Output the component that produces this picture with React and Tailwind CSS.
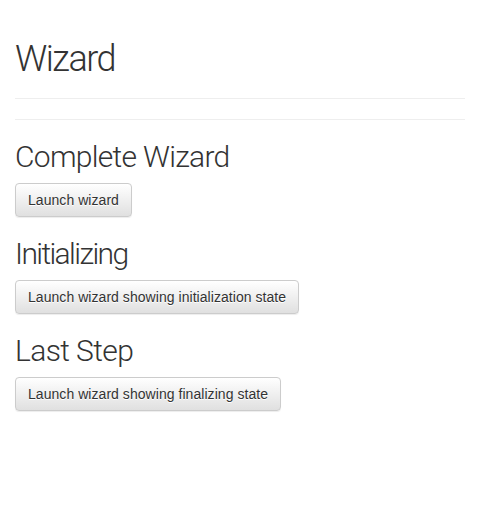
import React from 'react';

const headingFont = "font-['Roboto','Helvetica_Neue','Liberation_Sans',sans-serif] font-light text-[#333]";

const WizardButton = ({ children }) => (
  <button
    className="block h-[34px] px-3 rounded-[4px] border border-[#ccc] bg-gradient-to-b from-white to-[#e0e0e0] text-[14px] leading-5 tracking-[0.05px] text-[#333] font-['Liberation_Sans',Arial,sans-serif] [text-shadow:0_1px_0_#fff] shadow-[inset_0_1px_0_rgba(255,255,255,0.15),0_1px_1px_rgba(0,0,0,0.075)]"
  >
    {children}
  </button>
);

const Section = ({ title, tracking, label }) => (
  <div>
    <h2 className={`${headingFont} ${tracking} text-[30px] leading-[33px] mt-5 mb-[10px]`}>{title}</h2>
    <WizardButton>{label}</WizardButton>
  </div>
);

export default function App() {
  return (
    <div className="bg-white min-h-[511px] px-[15px] pt-[39px] font-['Liberation_Sans',Arial,sans-serif]">
      {/* Page header */}
      <div className="pb-[9px] border-b border-[#eee]">
        <h1 className={`${headingFont} tracking-[-1.5px] text-[36px] leading-[40px] mb-[10px]`}>Wizard</h1>
      </div>
      <hr className="mt-5 border-0 border-t border-[#eee]" />

      <Section title="Complete Wizard" tracking="tracking-[-0.7px]" label="Launch wizard" />
      <Section title="Initializing" tracking="tracking-[-1.6px]" label="Launch wizard showing initialization state" />
      <Section title="Last Step" tracking="tracking-[-0.6px]" label="Launch wizard showing finalizing state" />
    </div>
  );
}
